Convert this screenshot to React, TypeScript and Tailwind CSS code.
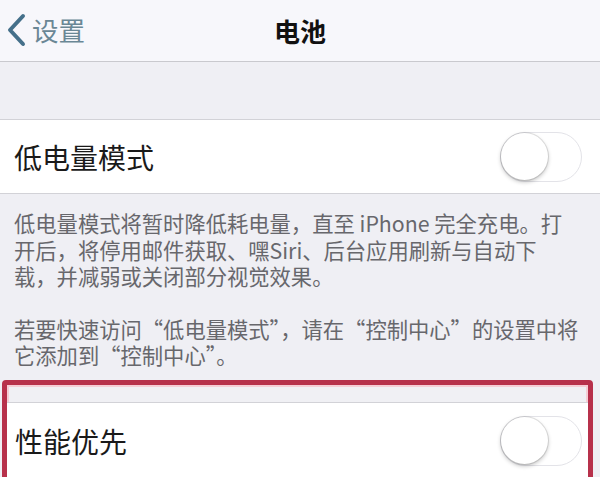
const font = { fontFamily: '"Noto Sans CJK SC", "Noto Sans", sans-serif' };

function Toggle() {
  return (
    <div className="relative h-[50px] w-[82px] rounded-full border-[1.5px] border-[#e3e3e8] bg-white">
      <div className="absolute left-0 top-[0px] h-[47px] w-[47px] rounded-full bg-white shadow-[0_2px_4px_rgba(0,0,0,0.25),0_0_0_1px_rgba(0,0,0,0.1)]" />
    </div>
  );
}

export default function App() {
  return (
    <div className="h-[477px] w-[600px] overflow-hidden bg-[#efeff4]" style={font}>
      {/* nav bar */}
      <div className="grid h-[62px] grid-cols-[1fr_auto_1fr] items-center border-b border-[#c9c9ce] bg-[#f7f7fb]">
        <div className="flex items-center pl-[5px]">
          <svg width="22" height="34" viewBox="0 0 22 34" className="mt-[-2px]">
            <path d="M18 3 L5 17 L18 31" fill="none" stroke="#45708a" strokeWidth="4" strokeLinecap="round" strokeLinejoin="round" />
          </svg>
          <span className="ml-[5px] text-[26.5px] leading-none text-[#6a8795]">设置</span>
        </div>
        <div className="text-[26px] font-semibold leading-none text-[#111]">电池</div>
        <div />
      </div>

      <div className="h-[57px]" />

      <div className="flex h-[75px] items-center justify-between border-y border-[#d2d2d7] bg-white pl-[14px] pr-[18px]">
        <span className="text-[28px] leading-none text-[#1a1a1a]">低电量模式</span>
        <Toggle />
      </div>

      <div className="px-[14px] pt-[16px] text-[21.3px] leading-[26.5px] text-[#67676c]">
        <p className="whitespace-nowrap">
          低电量模式将暂时降低耗电量，直至 iPhone 完全充电。打
          <br />
          开后，将停用邮件获取、嘿Siri、后台应用刷新与自动下
          <br />
          载，并减弱或关闭部分视觉效果。
        </p>
        <p className="mt-[26px] whitespace-nowrap">
          若要快速访问“低电量模式”，请在“控制中心”的设置中将
          <br />
          它添加到“控制中心”。
        </p>
      </div>

      <div className="ml-[2px] mt-[11px] w-[591px] rounded-[4px] border-[5px] border-[#b7314b] bg-[#f0f0f4] shadow-[inset_0_0_0_2px_#f5cdd5]">
        <div className="h-[17px]" />
        <div className="flex h-[78px] items-center justify-between border-t border-[#d2d2d7] bg-white pl-[8px] pr-[6px]">
          <span className="text-[28px] leading-none text-[#1a1a1a]">性能优先</span>
          <Toggle />
        </div>
      </div>
    </div>
  );
}
